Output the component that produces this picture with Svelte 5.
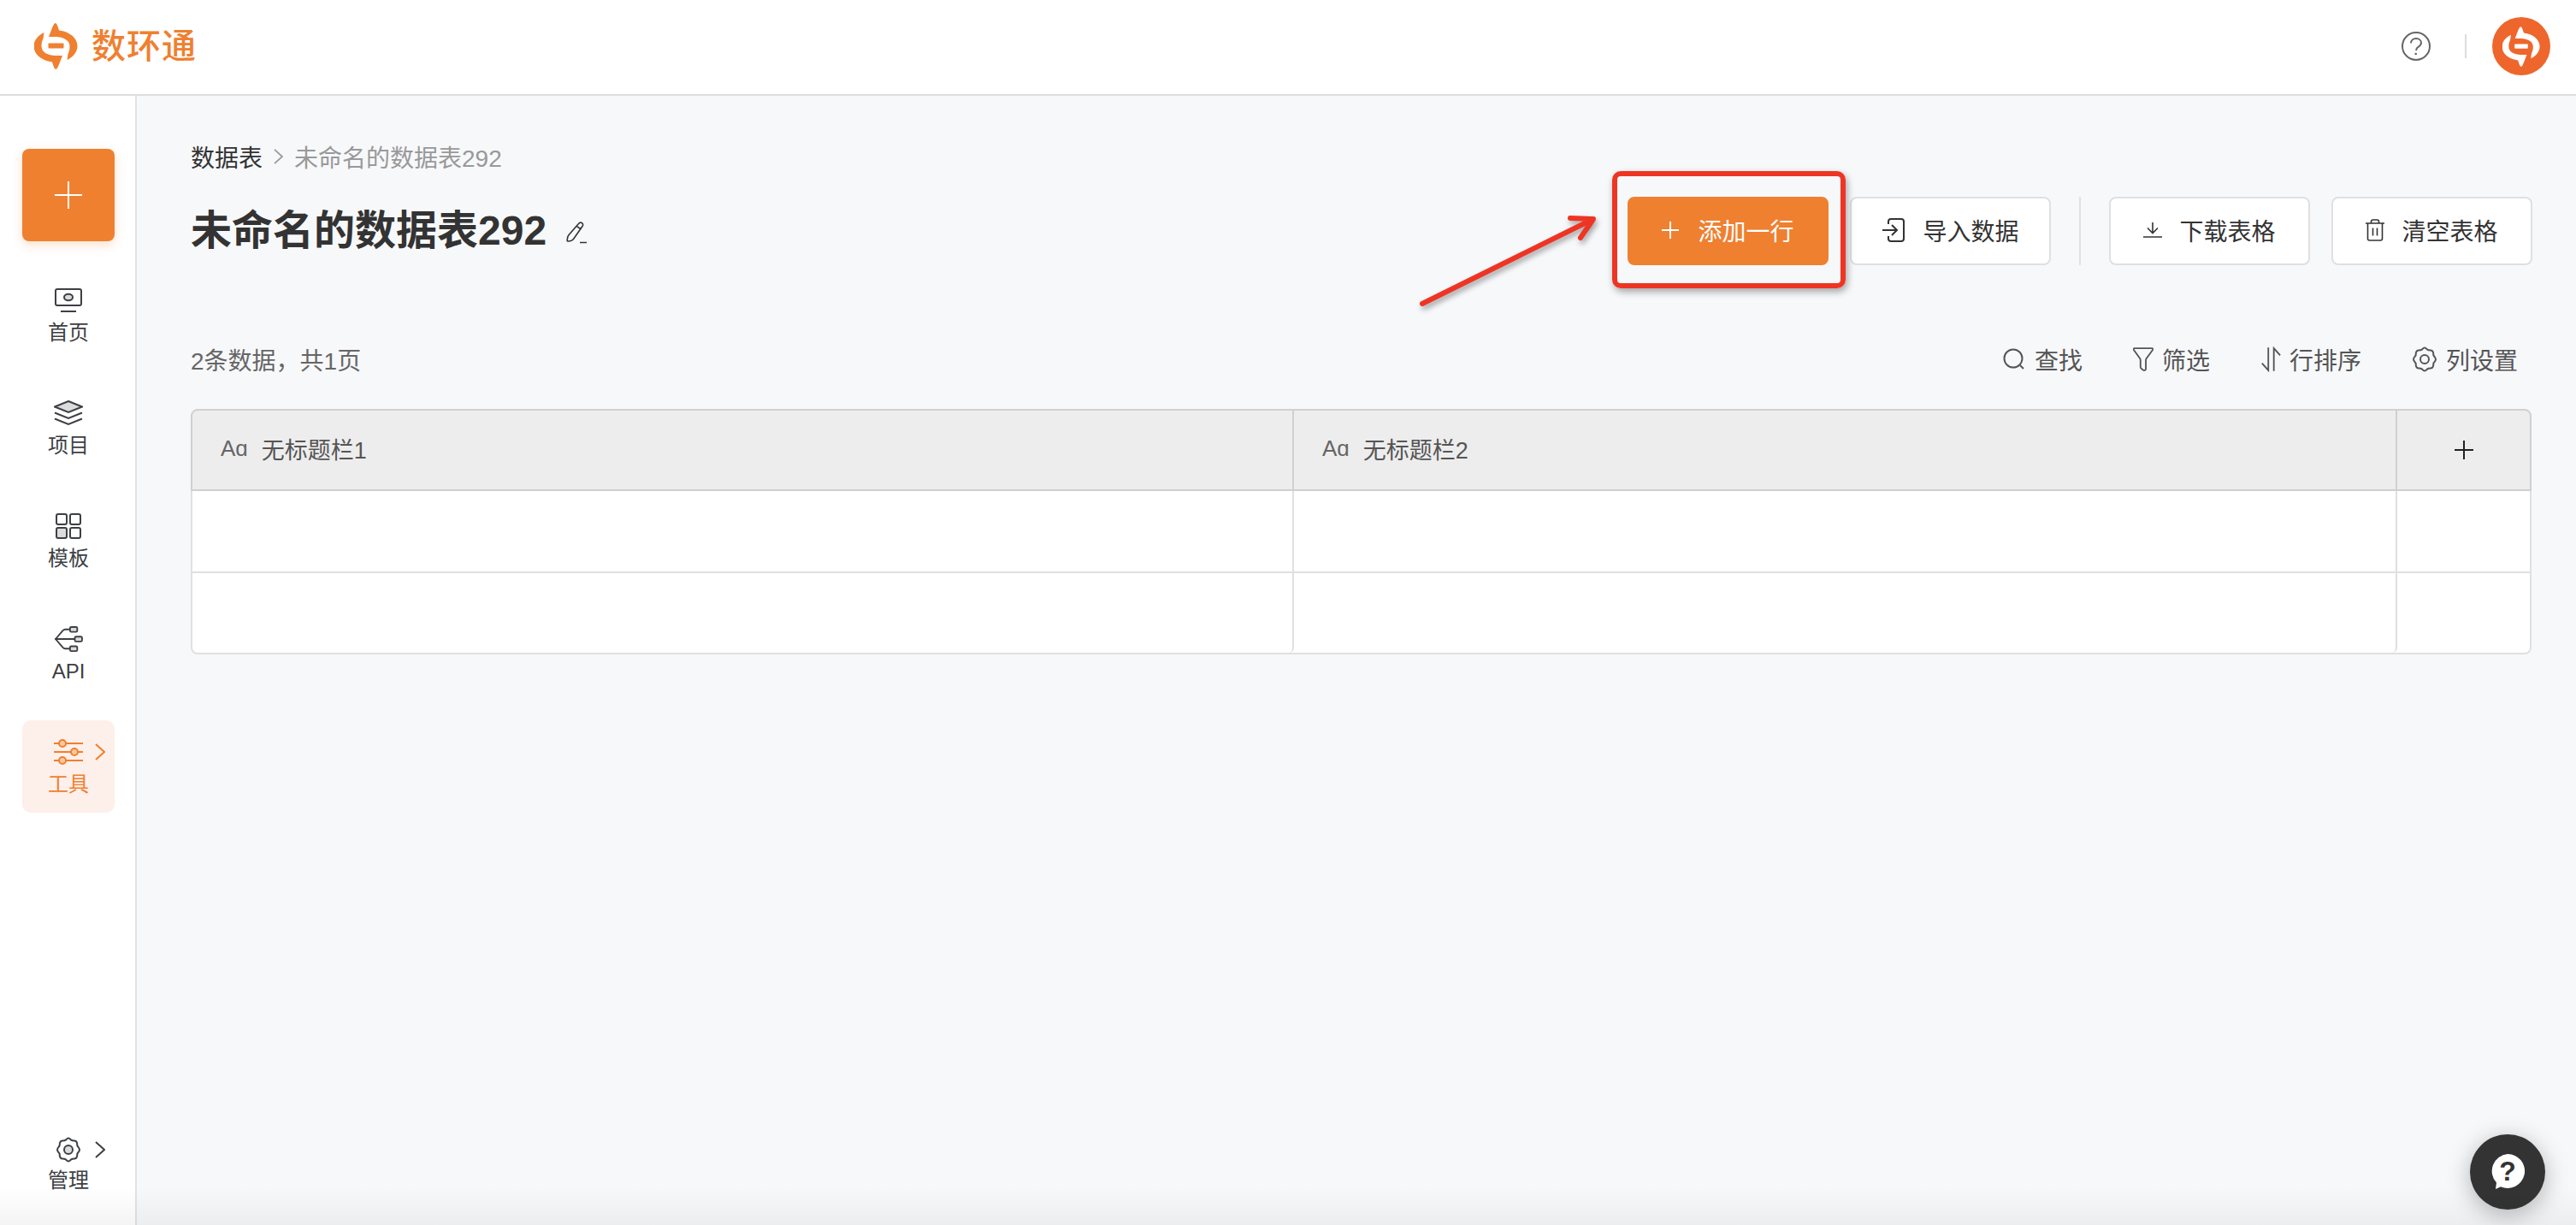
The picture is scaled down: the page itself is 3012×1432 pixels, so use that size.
<script>
  const headers = ["无标题栏1", "无标题栏2"];
  const rows = [1, 2];
</script>

{#snippet mark()}
  <path d="M24.5 0C26.5 0 27.5 4 29 8.5C41 10 50.5 17 50.5 27C50.5 34 45 40 38.5 43L39.500 36C41 33 41.500 30 41.500 27C41.500 20 34 16 25 16L17 16C19.5 10 22.5 0 24.5 0Z" />
  <path transform="rotate(180 25 27)" d="M24.5 0C26.5 0 27.5 4 29 8.5C41 10 50.5 17 50.5 27C50.5 34 45 40 38.5 43L39.500 36C41 33 41.500 30 41.500 27C41.500 20 34 16 25 16L17 16C19.5 10 22.5 0 24.5 0Z" />
  <rect x="16.5" y="23.5" width="18" height="6" rx="1" />
{/snippet}

{#snippet chevron()}
  <svg class="chevron" viewBox="0 0 12 20" width="12" height="20"><path d="M1 1l10 9-10 9" /></svg>
{/snippet}

{#snippet gear()}
  <path d="M15 1.500c1.500 0 2 1 3 2s2.500 1 4 1 2.500 1 3 2.500 0 2.500.5 3.500 2.500 2.500 2.500 4.500-2 3.500-2.500 4.500 0 2-.5 3.500-1.500 2.500-3 2.500-3 0-4 1-1.500 2-3 2-2-1-3-2-2.500-1-4-1-2.500-1-3-2.500 0-2.500-.5-3.500-2.500-2.500-2.500-4.500 2-3.500 2.500-4.500 0-2 .5-3.500 1.500-2.500 3-2.500 3 0 4-1 1.500-2 3-2z" />
{/snippet}

<div class="page">
  <header class="topbar">
    <div class="brand">
      <svg class="brand-mark" viewBox="0 0 51 54" width="51" height="54">{@render mark()}</svg>
      <span class="brand-name">数环通</span>
    </div>
    <div class="top-actions">
      <svg viewBox="0 0 34 34" width="34" height="34" class="help-icon">
        <circle cx="17" cy="17" r="16" />
        <path d="M11 13.5c0-3.4 2.7-5.5 6-5.5s6 2.100 6 5c0 2.400-1.500 3.500-3.200 4.700-1.500 1-2.500 2.100-2.800 4.300" />
        <circle class="dot" cx="16.700" cy="26" r="1.300" />
      </svg>
      <span class="top-divider"></span>
      <div class="avatar">
        <svg viewBox="0 0 51 54" width="44" height="47">{@render mark()}</svg>
      </div>
    </div>
  </header>

  <div class="body">
    <aside class="sidebar">
      <button class="create" aria-label="新建">
        <svg viewBox="0 0 32 32" width="32" height="32"><path d="M16 0v32M0 16h32" /></svg>
      </button>

      <nav class="nav">
        <div class="nav-item">
          <svg viewBox="0 0 32 28" width="32" height="28">
            <rect x="1" y="1" width="30" height="19" rx="2" />
            <ellipse class="tone" cx="16" cy="10.500" rx="5" ry="3.800" />
            <path d="M7 27h18" />
          </svg>
          <span>首页</span>
        </div>
        <div class="nav-item">
          <svg viewBox="0 0 34 30" width="34" height="30">
            <path class="tone" d="M17 1L33 7.500 17 14 1 7.500z" />
            <path d="M1 14.500l16 6.500 16-6.500M1 21.500l16 6.500 16-6.500" />
          </svg>
          <span>项目</span>
        </div>
        <div class="nav-item">
          <svg viewBox="0 0 30 30" width="30" height="30">
            <rect x="1" y="1" width="12" height="12" rx="2" />
            <rect x="17" y="1" width="12" height="12" rx="2" />
            <rect class="tone" x="1" y="17" width="12" height="12" rx="2" />
            <rect x="17" y="17" width="12" height="12" rx="2" />
          </svg>
          <span>模板</span>
        </div>
        <div class="nav-item">
          <svg viewBox="0 0 36 32" width="36" height="32">
            <path d="M1 16h25M2 16L11 5.500c1-1 1.500-1.500 3-1.500h6M2 16l9 10.500c1 1 1.500 1.500 3 1.500h6" />
            <rect class="tone" x="20" y="1" width="9" height="6" rx="1.500" />
            <rect class="tone" x="26" y="13" width="9" height="6" rx="1.500" />
            <rect class="tone" x="20" y="25" width="9" height="6" rx="1.500" />
          </svg>
          <span>API</span>
        </div>
        <div class="nav-item active">
          <svg viewBox="0 0 34 30" width="34" height="30">
            <path d="M0 5h34M0 15h34M0 25h34" />
            <circle cx="10" cy="5" r="4" />
            <circle cx="24" cy="15" r="4" />
            <circle cx="10" cy="25" r="4" />
          </svg>
          <span>工具</span>
          {@render chevron()}
        </div>
      </nav>

      <div class="nav-item settings">
        <svg viewBox="0 0 30 30" width="30" height="30">
          {@render gear()}
          <circle class="tone" cx="15" cy="15" r="5" />
        </svg>
        <span>管理</span>
        {@render chevron()}
      </div>
    </aside>

    <main class="main">
      <div class="crumbs">
        <span class="crumb-root">数据表</span>
        <svg viewBox="0 0 12 20" width="11" height="18" class="crumb-sep"><path d="M1 1l10 9-10 9" /></svg>
        <span class="crumb-current">未命名的数据表292</span>
      </div>

      <div class="title-row">
        <div class="title-wrap">
          <h1>未命名的数据表292</h1>
          <svg viewBox="0 0 26 26" width="26" height="26" class="edit-icon">
            <path d="M15.500 2.500c1.200-1.500 2.800-1.700 4-.8s1.500 2.500.5 3.800L9.500 20.500c-.8 1-1.500 1.500-3 2l-3 .5c-1 .1-1.500-.5-1.300-1.500l.5-3c.2-1.200.7-2 1.500-3zM13.500 5.500l5 3.700M17 24.500h8" />
          </svg>
        </div>

        <div class="actions">
          <button class="btn primary">
            <svg viewBox="0 0 20 20" width="20" height="20"><path d="M10 0v20M0 10h20" /></svg>
            添加一行
          </button>
          <button class="btn">
            <svg viewBox="0 0 28 28" width="28" height="28">
              <path d="M8 7V4c0-1.700 1-3 3-3h12c2 0 3 1.300 3 3v20c0 1.700-1 3-3 3H11c-2 0-3-1.300-3-3v-3M1 14h17M12 8l6 6-6 6" />
            </svg>
            导入数据
          </button>
          <span class="actions-divider"></span>
          <button class="btn thin">
            <svg viewBox="0 0 22 18" width="22" height="18"><path d="M11 0v12M5 6.500l6 6 6-6M0 17h22" /></svg>
            下载表格
          </button>
          <button class="btn thin">
            <svg viewBox="0 0 22 26" width="22" height="26">
              <path d="M0 5h22M2.500 5v18c0 1.200.7 2 2 2h13c1.300 0 2-.8 2-2V5M6.500 5V3c0-1.200.7-2 2-2h5c1.300 0 2 .8 2 2v2M8.500 10.500v9M13.500 10.500v9" />
            </svg>
            清空表格
          </button>
        </div>
      </div>

      <div class="toolbar">
        <span class="count">2条数据，共1页</span>
        <div class="tools">
          <span class="tool">
            <svg viewBox="0 0 28 28" width="28" height="28"><circle cx="13" cy="13" r="10.500" /><path d="M21 21l4 4" /></svg>
            查找
          </span>
          <span class="tool">
            <svg viewBox="0 0 26 30" width="24" height="28"><path d="M2 1h22c1 0 1.500 1 1 2l-8 11c-.5.700-.7 1.200-.7 2v11c0 2-2 2.500-3.500 1.500l-2-1.500c-1-.7-1.300-1.300-1.300-2.500v-8.500c0-.8-.2-1.300-.7-2L1 3c-.5-1 0-2 1-2z" /></svg>
            筛选
          </span>
          <span class="tool">
            <svg viewBox="0 0 26 32" width="24" height="30"><path d="M10 1v29L2 21M17 31V2l8 9" /></svg>
            行排序
          </span>
          <span class="tool">
            <svg viewBox="0 0 30 30" width="30" height="30">
              {@render gear()}
              <circle cx="15" cy="15" r="5" />
            </svg>
            列设置
          </span>
        </div>
      </div>

      <div class="grid">
        {#each headers as title}
          <div class="cell head">
            <span class="type-mark">Aɑ</span>
            <span>{title}</span>
          </div>
        {/each}
        <div class="cell head add-col">
          <svg viewBox="0 0 22 22" width="22" height="22"><path d="M11 0v22M0 11h22" /></svg>
        </div>
        {#each rows as row}
          <div class="cell" class:last={row === rows.length}></div>
          <div class="cell" class:last={row === rows.length}></div>
          <div class="cell" class:last={row === rows.length}></div>
        {/each}
      </div>

      <!-- annotation drawn over the screenshot -->
      <div class="callout"></div>
      <svg class="arrow" viewBox="0 0 220 130" width="220" height="130">
        <path d="M4 118L202 20M177 18L204 19L189 41" />
      </svg>
    </main>
  </div>

  <button class="chat" aria-label="帮助">
    <svg viewBox="0 0 40 42" width="40" height="42">
      <path class="bubble" d="M20 0a20 20 0 1 1-8 38.300L6 41l1-7.500A20 20 0 0 1 20 0z" />
      <text x="20" y="31" text-anchor="middle">?</text>
    </svg>
  </button>
</div>

<style>
  :global(body) {
    margin: 0;
    background: #f7f8fa;
  }

  .page {
    height: 1432px;
    display: flex;
    flex-direction: column;
    overflow: hidden;
    position: relative;
    font-family: "Liberation Sans", "Noto Sans CJK SC", sans-serif;
    font-size: 28px;
    color: #333;
  }

  /* faint shade along the bottom edge of the window */
  .page::after {
    content: "";
    position: absolute;
    left: 0;
    right: 0;
    bottom: 0;
    height: 44px;
    background: linear-gradient(rgba(0, 0, 0, 0), rgba(0, 0, 0, 0.045));
    pointer-events: none;
  }

  svg path,
  svg rect,
  svg circle,
  svg ellipse {
    fill: none;
    stroke: currentColor;
    stroke-width: 2;
  }

  /* top bar */
  .topbar {
    flex: none;
    box-sizing: border-box;
    height: 112px;
    background: #fff;
    border-bottom: 2px solid #dedede;
    display: flex;
    align-items: center;
    justify-content: space-between;
    padding: 0 30px 2px 40px;
  }

  .brand {
    display: flex;
    align-items: center;
    gap: 16px;
    color: #ef8030;
  }

  .brand-mark :global(path),
  .brand-mark :global(rect),
  .avatar :global(path),
  .avatar :global(rect) {
    fill: currentColor;
    stroke: none;
  }

  .brand-name {
    font-size: 40px;
    font-weight: 500;
    line-height: 54px;
    letter-spacing: 1px;
  }

  .top-actions {
    display: flex;
    align-items: center;
  }

  .help-icon {
    color: #666;
  }

  .help-icon .dot {
    fill: currentColor;
    stroke: none;
  }

  .top-divider {
    width: 2px;
    height: 28px;
    background: #dcdce0;
    margin: 0 30px 0 40px;
  }

  .avatar {
    width: 68px;
    height: 68px;
    border-radius: 50%;
    background: #ee662c;
    color: #fff;
    display: flex;
    align-items: center;
    justify-content: center;
  }

  .body {
    flex: 1;
    display: flex;
    min-height: 0;
  }

  /* sidebar */
  .sidebar {
    flex: none;
    box-sizing: border-box;
    width: 160px;
    background: #fff;
    border-right: 2px solid #e2e2e4;
    padding: 62px 24px 17px 26px;
    display: flex;
    flex-direction: column;
  }

  .create {
    flex: none;
    width: 108px;
    height: 108px;
    border: none;
    border-radius: 8px;
    background: #ef8030;
    color: #fff;
    padding: 0;
    display: flex;
    align-items: center;
    justify-content: center;
    box-shadow: 0 4px 12px rgba(239, 128, 48, 0.25);
  }

  .nav {
    margin-top: 32px;
    display: flex;
    flex-direction: column;
    gap: 24px;
  }

  .nav-item {
    position: relative;
    box-sizing: border-box;
    width: 108px;
    height: 108px;
    border-radius: 10px;
    color: #3d3f44;
    display: flex;
    flex-direction: column;
    align-items: center;
    font-size: 24px;
    line-height: 32px;
  }

  .nav-item > svg:first-child {
    margin-top: 22px;
    height: 30px;
  }

  .nav-item span {
    margin-top: 7px;
  }

  .settings span {
    margin-top: 5px;
  }

  .nav-item :global(.tone) {
    fill: #dcdcdc;
  }

  .nav-item.active {
    background: #fdefe9;
    color: #ef8030;
  }

  .nav-item.active circle {
    fill: #f9c9a0;
  }

  .chevron {
    position: absolute;
    left: 85px;
    top: 27px;
  }

  .settings {
    margin-top: auto;
  }

  /* main */
  .main {
    flex: 1;
    min-width: 0;
    position: relative;
    padding: 51px 52px 0 63px;
  }

  .crumbs {
    display: flex;
    align-items: center;
    height: 40px;
    gap: 13px;
  }

  .crumb-sep {
    color: #999;
  }

  .crumb-current {
    color: #999;
  }

  .title-row {
    margin-top: 27px;
    display: flex;
    align-items: center;
    justify-content: space-between;
    height: 80px;
  }

  .title-wrap {
    display: flex;
    align-items: center;
    gap: 22px;
  }

  h1 {
    margin: 0;
    font-size: 48px;
    line-height: 64px;
    font-weight: 700;
  }

  .edit-icon {
    margin-top: 4px;
  }

  .edit-icon path {
    stroke-width: 1.6;
  }

  .actions {
    display: flex;
    align-items: center;
    gap: 25px;
    margin-right: -1px;
  }

  .btn {
    box-sizing: border-box;
    width: 235px;
    height: 80px;
    background: #fff;
    border: 2px solid #e0e0e0;
    border-radius: 8px;
    color: #333;
    font: inherit;
    display: flex;
    align-items: center;
    justify-content: center;
    gap: 20px;
    padding: 0 0 2px;
  }

  .btn.thin path {
    stroke-width: 1.6;
  }

  .btn.primary {
    background: #ef8030;
    border-color: #ef8030;
    color: #fff;
    gap: 22px;
  }

  .actions-divider {
    width: 2px;
    height: 80px;
    background: #e2e2e4;
    margin: 0 8px;
  }

  .toolbar {
    margin-top: 90px;
    margin-bottom: 38px;
    height: 40px;
    display: flex;
    align-items: center;
    justify-content: space-between;
    color: #666;
  }

  .tools {
    display: flex;
    align-items: center;
    gap: 59px;
    padding-right: 16px;
    color: #555;
  }

  .tool {
    display: flex;
    align-items: center;
    gap: 10px;
  }

  .grid {
    box-sizing: border-box;
    height: 287px;
    background: #fff;
    border: 2px solid #e0e0e0;
    border-top-color: #d0d0d0;
    border-radius: 8px;
    display: grid;
    grid-template-columns: 1288px 1290px 1fr;
    grid-template-rows: 94px 96px 1fr;
  }

  .cell {
    box-sizing: border-box;
    border-right: 2px solid #e0e0e0;
    border-bottom: 2px solid #e0e0e0;
    min-width: 0;
  }

  .cell:nth-child(3n) {
    border-right: none;
  }

  .cell.last {
    border-bottom: none;
    border-radius: 0 0 6px 6px;
  }

  .head {
    background: #ededed;
    display: flex;
    align-items: center;
    gap: 16px;
    padding: 0 0 4px 33px;
    font-size: 27px;
    color: #555;
    border-color: #d0d0d0;
  }

  .head:first-child {
    border-top-left-radius: 6px;
    box-shadow: -2px 0 0 #d0d0d0;
  }

  .type-mark {
    font-size: 26px;
    color: #666;
  }

  .add-col {
    padding: 0;
    justify-content: center;
    color: #222;
    border-top-right-radius: 6px;
    box-shadow: 2px 0 0 #d0d0d0;
  }

  /* red annotation */
  .callout {
    position: absolute;
    left: 1725px;
    top: 88px;
    box-sizing: border-box;
    width: 273px;
    height: 137px;
    border: 6px solid #ee3524;
    border-radius: 10px;
    box-shadow: 2px 4px 8px rgba(0, 0, 0, 0.35);
  }

  .arrow {
    position: absolute;
    left: 1499px;
    top: 125px;
    filter: drop-shadow(2px 4px 3px rgba(0, 0, 0, 0.35));
  }

  .arrow path {
    stroke: #ee3524;
    stroke-width: 6;
    stroke-linecap: round;
    stroke-linejoin: round;
  }

  /* help bubble */
  .chat {
    position: absolute;
    left: 2888px;
    top: 1326px;
    width: 88px;
    height: 88px;
    border: none;
    border-radius: 50%;
    background: #333;
    padding: 0;
    display: flex;
    align-items: center;
    justify-content: center;
    box-shadow: 0 6px 28px rgba(0, 0, 0, 0.28);
  }

  .chat .bubble {
    fill: #fff;
    stroke: none;
  }

  .chat text {
    font-size: 32px;
    font-weight: 700;
    fill: #333;
  }
</style>
